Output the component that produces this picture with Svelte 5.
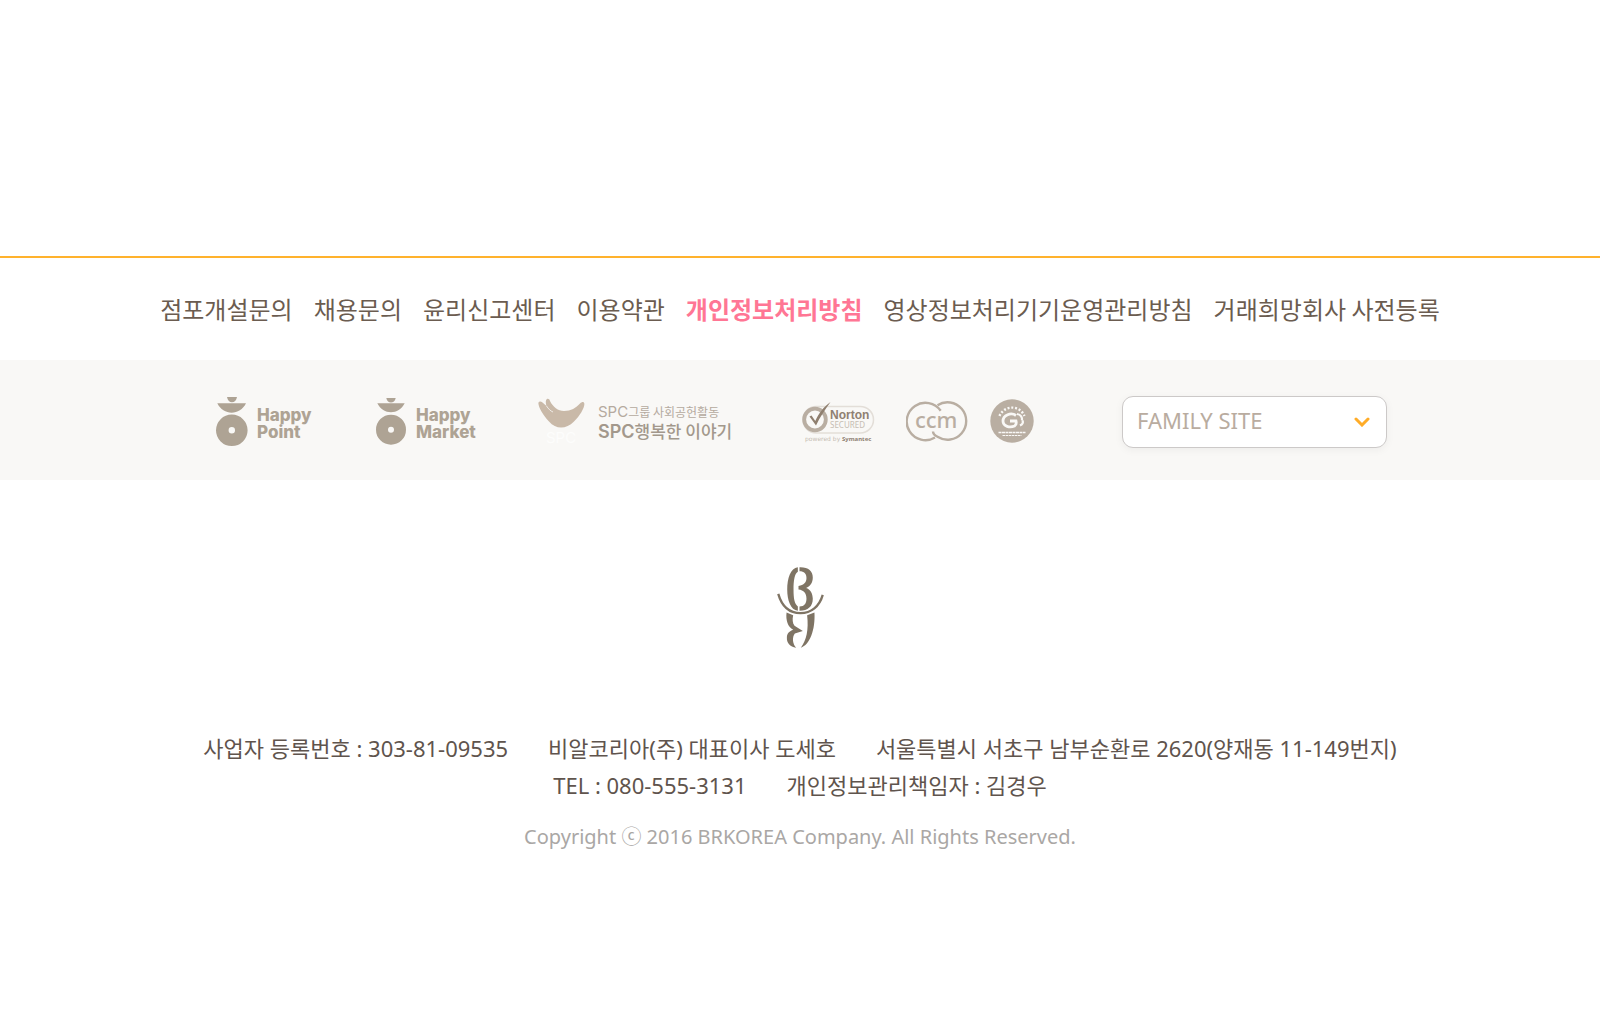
<script>
  const links = [
    { label: '점포개설문의' },
    { label: '채용문의' },
    { label: '윤리신고센터' },
    { label: '이용약관' },
    { label: '개인정보처리방침', strong: true },
    { label: '영상정보처리기기운영관리방침' },
    { label: '거래희망회사 사전등록' }
  ];
  const info = [
    ['사업자 등록번호 : 303-81-09535', '비알코리아(주) 대표이사 도세호', '서울특별시 서초구 남부순환로 2620(양재동 11-149번지)'],
    ['TEL : 080-555-3131', '개인정보관리책임자 : 김경우']
  ];
</script>

<footer>
  <nav aria-label="Footer">
    {#each links as link}
      <a href="#top" class:strong={link.strong}>{link.label}</a>
    {/each}
  </nav>

  <div class="partners">
    <a href="#happypoint" aria-label="Happy Point">
      <svg width="100" height="60" viewBox="0 0 100 60" fill="#aea394">
        <path d="M11 7h10c-1 7-9 7-10 0zM1.300 13.300h28.700c-6 12.500-22.700 12.500-28.700 0z" />
        <circle cx="15.800" cy="40.300" r="9.500" fill="none" stroke="#aea394" stroke-width="12.600" />
        <text class="happy" x="41" y="31">Happy</text>
        <text class="happy" x="41" y="48">Point</text>
      </svg>
    </a>
    <a href="#happymarket" aria-label="Happy Market">
      <svg width="102" height="60" viewBox="0 0 102 60" fill="#aea394">
        <path d="M10.300 8h9.400c-1 6-8.400 6-9.400 0zM1.300 13.300h27.400c-6 12-21.400 12-27.400 0z" />
        <circle cx="15" cy="39.700" r="9" fill="none" stroke="#aea394" stroke-width="12" />
        <text class="happy" x="40" y="31">Happy</text>
        <text class="happy" x="40" y="48">Market</text>
      </svg>
    </a>
    <a href="#spc" aria-label="SPC">
      <svg width="196" height="60" viewBox="0 0 196 60">
        <path fill="#c9b9a8" d="M.5 12.500c.5-1.500 2.500-1.500 4 0l4 3.500c-1-3-1-6 .5-7 1.500-.5 2.500.500 3 2 3 6 8 10 14 10 7 0 12-3 16-7.500 2-2 4-2 4.300 0 .7 3-4 12-10.300 18-8 8-18 8-25 0C5 25.500-.5 15.500.500 12.500z" />
        <path fill="none" stroke="#f9f8f6" stroke-width=".8" d="M8.500 16c2 3 4 5 6.500 6" />
        <text class="ghost" x="8" y="53">SPC</text>
        <text class="thin" x="60" y="27"><tspan class="latin">SPC</tspan>그룹 사회공헌활동</text>
        <text class="thick" x="60" y="48"><tspan class="latin">SPC</tspan>행복한 이야기</text>
      </svg>
    </a>
    <div class="seals">
      <svg class="secure" width="73" height="60" viewBox="0 0 73 60" role="img" aria-label="Norton Secured">
        <rect x="1" y="16.500" width="70.500" height="26.500" rx="13.200" fill="none" stroke="#e3ded8" stroke-width="1.500" />
        <circle cx="13" cy="29.500" r="10.800" fill="#f9f8f6" stroke="#b9aea2" stroke-width="3.800" />
        <path fill="#8f7f6f" d="M7.500 26.500l2-1 3.800 5.500C17 23 21.500 17 28.500 12 23 19.500 18 27 14 35.500z" />
        <text class="norton" x="28" y="29">Norton</text>
        <text class="secured" x="28" y="38">SECURED</text>
        <text class="powered" x="3" y="51">powered by</text>
        <text class="symantec" x="40" y="51">Symantec</text>
      </svg>
      <svg width="62" height="60" viewBox="0 0 62 60" role="img" aria-label="ccm">
        <g fill="none" stroke="#b9aea2" stroke-width="2.400">
          <path d="M34.700 20.700A18.700 18.700 0 1 0 29 47.500" />
          <path d="M31.500 15.200A18.700 18.700 0 1 1 31.500 46.800C29 45.500 27 43.500 27 41.500" />
        </g>
        <text class="ccm" x="9" y="38">ccm</text>
      </svg>
      <svg width="44" height="60" viewBox="0 0 44 60" role="img" aria-label="Certification mark">
        <circle cx="22" cy="31" r="21.700" fill="#b9aea2" />
        <g fill="none" stroke="#f9f8f6">
          <path d="M9.500 26A13.500 13.500 0 0 1 34.500 26" stroke-width="2.400" stroke-dasharray="2 1.800" />
          <path d="M26 25.500c-5-3.500-13-.5-13 5.500 0 5.500 7 7 11.500 5 1.500-1 2-3 1.500-5h-6" stroke-width="2.800" />
          <path d="M27 24c4 .5 5.500 3.500 5 6.500M30 35.500c2-1 3.500-3 2.500-5" stroke-width="2.200" />
          <path d="M8.500 42.500h27" stroke-width="1.500" stroke-dasharray="3 .5" />
          <path d="M12.500 45.500h19" stroke-width="1.200" stroke-dasharray="2.500 .6" />
        </g>
      </svg>
    </div>
    <div class="family">
      <select aria-label="Family site">
        <option>FAMILY SITE</option>
      </select>
      <svg width="16" height="10" viewBox="0 0 16 10" aria-hidden="true">
        <path d="M2 2l6 6 6-6" fill="none" stroke="#ffac28" stroke-width="3" stroke-linecap="round" />
      </svg>
    </div>
  </div>

  <section>
    <svg class="mark" width="47" height="81" viewBox="82 50 140 244" fill="#7f7464" role="img" aria-label="BR Korea">
      <path d="M144 51C122 53 112 85 112 118c0 32 10 62 32 64v-13c-10-8-13-22-13-51 0-28 3-48 13-54z" />
      <path d="M149 51c26-1 40 11 40 31 0 17-9 27-20 31 12 4 20 16 20 33 0 23-14 36-40 36v-13c15 0 21-9 21-24 0-16-8-25-24-27v-11c16-3 24-11 24-24 0-13-7-20-21-20z" />
      <path d="M85 131c12 42 39 58 67 58 32 0 57-20 67-55" fill="none" stroke="#7f7464" stroke-width="7" />
      <path d="M110 187l20 8c-3 12-2 24 4 32l25 16-24 7c-9 12-7 31 4 43-19-3-29-15-28-31 0-12 8-19 19-23-16-8-23-29-20-52z" />
      <path d="M172 195l22-8c3 51-14 98-41 106 17-23 24-53 19-98z" />
    </svg>
    <address>
      {#each info as row}
        <p>
          {#each row as item}<span>{item}</span>{/each}
        </p>
      {/each}
    </address>
    <small>Copyright ⓒ 2016 BRKOREA Company. All Rights Reserved.</small>
  </section>
</footer>

<style>
  :global(body) {
    margin: 0;
    background: #fff;
  }
  footer {
    margin-top: 256px;
    border-top: 2px solid #ffb22d;
    font-family: 'Noto Sans', 'Noto Sans CJK KR', sans-serif;
  }
  nav {
    display: flex;
    flex-wrap: wrap;
    justify-content: center;
    gap: 21px;
    padding: 33px 0;
    font: 400 24px/36px 'Noto Sans CJK KR', sans-serif;
  }
  nav a {
    color: #6b5c50;
    text-decoration: none;
  }
  nav .strong {
    color: #ff7694;
    font-weight: 700;
  }
  .partners {
    display: flex;
    flex-wrap: wrap;
    align-items: center;
    justify-content: center;
    gap: 60px;
    padding: 30px 0 30px 3px;
    background: #f9f8f6;
  }
  .partners svg {
    display: block;
  }
  .seals {
    display: flex;
    gap: 22px;
    margin: 0 28px 0 8px;
  }
  .secure {
    margin-right: 9px;
  }
  .happy {
    font: 800 17px Inter, sans-serif;
  }
  .latin {
    font-family: Inter, sans-serif;
  }
  .thin {
    font: 400 12px 'Noto Sans CJK KR', sans-serif;
    fill: #b5aa9f;
  }
  .thin .latin {
    font-size: 15px;
  }
  .thick {
    font: 500 17px 'Noto Sans CJK KR', sans-serif;
    fill: #a3988c;
  }
  .thick .latin {
    font-size: 18px;
    font-weight: 600;
  }
  .ghost {
    font: 400 15px Inter, sans-serif;
    fill: #fdfdfc;
  }
  .norton {
    font: 700 12px 'Liberation Sans', sans-serif;
    fill: #8f8072;
  }
  .secured {
    font: 400 8px 'Noto Sans', sans-serif;
    fill: #c6bdb3;
  }
  .powered {
    font: 400 6px 'DejaVu Sans', sans-serif;
    fill: #c6bdb3;
  }
  .symantec {
    font: 700 6px 'Noto Sans', sans-serif;
    fill: #8f8072;
  }
  .ccm {
    font: 500 22px 'Noto Sans', sans-serif;
    fill: #b9aea2;
  }
  .family {
    display: grid;
    align-items: center;
    width: 265px;
    margin-top: 4px;
  }
  .family select,
  .family svg {
    grid-area: 1 / 1;
  }
  .family select {
    appearance: none;
    width: 100%;
    height: 52px;
    padding: 0 14px 4px;
    border: 1px solid #ccc9c8;
    border-radius: 11px;
    background: #fff;
    box-shadow: 0 2px 8px #0000000d;
    color: #b9aca0;
    font: 400 22px 'Noto Sans', sans-serif;
  }
  .family svg {
    justify-self: end;
    margin-right: 17px;
    pointer-events: none;
  }
  section {
    display: flex;
    flex-direction: column;
    align-items: center;
    padding: 87px 0;
    text-align: center;
  }
  address {
    margin-top: 82px;
    color: #5f544d;
    font-size: 22px;
    font-style: normal;
    line-height: 37px;
  }
  p {
    display: flex;
    flex-wrap: wrap;
    justify-content: center;
    column-gap: 40px;
    margin: 0;
  }
  small {
    margin-top: 21px;
    color: #aaa7a5;
    font-size: 20px;
    line-height: 24px;
  }
</style>
